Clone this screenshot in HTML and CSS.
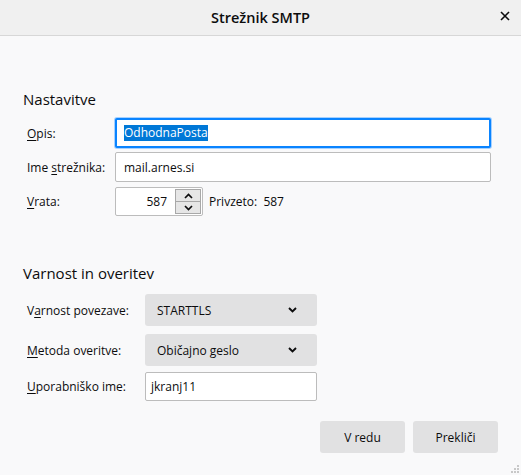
FILE: index.html
```html
<!DOCTYPE html>
<html lang="sl">
<head>
<meta charset="utf-8">
<title>Strežnik SMTP</title>
<link rel="stylesheet" href="styles.css">
</head>
<body>
<div class="dialog">
  <header class="titlebar">
    <span class="title">Strežnik SMTP</span>
    <span class="close">
      <svg width="10" height="10" viewBox="0 0 10 10"><path d="M1 1L9 9M9 1L1 9" stroke="#0c0c0d" stroke-width="1.6" fill="none"/></svg>
    </span>
  </header>
  <main class="content">
    <section class="settings">
      <h2 class="heading">Nastavitve</h2>
      <div class="rows">
        <div class="row row-30">
          <label class="label label-s"><u>O</u>pis:</label>
          <div class="field field-focus"><span class="sel">OdhodnaPosta</span></div>
        </div>
        <div class="row row-30 gap-4">
          <label class="label label-s">Ime <u>s</u>trežnika:</label>
          <div class="field">mail.arnes.si</div>
        </div>
        <div class="row row-29 gap-5">
          <label class="label label-s"><u>V</u>rata:</label>
          <div class="port">
            <span class="port-val">587</span>
            <span class="spin">
              <span class="spin-btn"><svg width="9" height="6" viewBox="0 0 9 6"><path d="M1 5L4.5 1.5L8 5" stroke="#0c0c0d" stroke-width="1.7" fill="none"/></svg></span>
              <span class="spin-btn"><svg width="9" height="6" viewBox="0 0 9 6"><path d="M1 1L4.5 4.5L8 1" stroke="#0c0c0d" stroke-width="1.7" fill="none"/></svg></span>
            </span>
          </div>
          <span class="default">Privzeto:&nbsp; 587</span>
        </div>
      </div>
    </section>
    <section class="security">
      <h2 class="heading">Varnost in overitev</h2>
      <div class="rows">
        <div class="row row-32">
          <label class="label label-l">V<u>a</u>rnost povezave:</label>
          <div class="select">STARTTLS<svg class="chev" width="9" height="6" viewBox="0 0 9 6"><path d="M1 1L4.5 4.5L8 1" stroke="#0c0c0d" stroke-width="1.9" fill="none"/></svg></div>
        </div>
        <div class="row row-32 gap-8">
          <label class="label label-l"><u>M</u>etoda overitve:</label>
          <div class="select">Običajno geslo<svg class="chev" width="9" height="6" viewBox="0 0 9 6"><path d="M1 1L4.5 4.5L8 1" stroke="#0c0c0d" stroke-width="1.9" fill="none"/></svg></div>
        </div>
        <div class="row row-29 gap-6">
          <label class="label label-l"><u>U</u>porabniško ime:</label>
          <div class="field field-short">jkranj11</div>
        </div>
      </div>
    </section>
    <footer class="buttons">
      <button class="btn">V redu</button>
      <button class="btn">Prekliči</button>
    </footer>
  </main>
  <span class="grip">
    <svg width="10" height="10" viewBox="0 0 10 10" fill="#c8c8c8">
      <rect x="7" y="1" width="2" height="2"/>
      <rect x="4" y="4" width="2" height="2"/><rect x="7" y="4" width="2" height="2"/>
      <rect x="1" y="7" width="2" height="2"/><rect x="4" y="7" width="2" height="2"/><rect x="7" y="7" width="2" height="2"/>
    </svg>
  </span>
</div>
</body>
</html>
```
FILE: styles.css
```css
html, body {
  margin: 0;
  padding: 0;
}
body {
  width: 521px;
  height: 475px;
  overflow: hidden;
  background: #f9f9fa;
  font-family: "Open Sans", "Noto Sans", sans-serif;
  font-size: 12px;
  color: #0c0c0d;
}
.dialog {
  position: relative;
  height: 475px;
}
.titlebar {
  height: 35px;
  background: #f0f0f0;
  border-bottom: 1px solid #d7d7d7;
  display: flex;
  align-items: center;
  justify-content: center;
  position: relative;
}
.title {
  font-size: 14.5px;
  font-weight: 600;
  color: #0c0c0d;
}
.close {
  position: absolute;
  right: 11px;
  top: 11px;
  width: 10px;
  height: 10px;
  display: flex;
}
.content {
  padding: 0 23px;
}
.heading {
  margin: 0;
  font-size: 15px;
  font-weight: 400;
  line-height: 20px;
}
.settings {
  padding-top: 53px;
}
.settings .heading {
  margin-bottom: 9px;
}
.rows {
  display: flex;
  flex-direction: column;
  padding-left: 4px;
}
.settings .rows {
  padding-right: 7px;
}
.row {
  display: flex;
  align-items: center;
}
.row-30 { height: 30px; }
.row-29 { height: 29px; }
.row-32 { height: 32px; }
.gap-4 { margin-top: 4px; }
.gap-5 { margin-top: 5px; }
.gap-6 { margin-top: 6px; }
.gap-8 { margin-top: 8px; }
.label {
  white-space: nowrap;
  flex: none;
}
.label-s { width: 88px; }
.label-l { width: 118px; }
.label u {
  text-decoration-thickness: 1px;
  text-underline-offset: 2px;
}
.field {
  box-sizing: border-box;
  flex: 1;
  height: 100%;
  background: #fff;
  border: 1px solid #bcbcbc;
  border-radius: 2px;
  display: flex;
  align-items: center;
  padding-left: 8px;
}
.field-focus {
  border: 2px solid #0a84ff;
  box-shadow: 0 0 0 1px #a6d1ff;
  padding-left: 7px;
}
.sel {
  background: #0078d7;
  color: #fff;
  line-height: 16px;
}
.port {
  box-sizing: border-box;
  width: 88px;
  height: 100%;
  background: #fff;
  border: 1px solid #bcbcbc;
  border-radius: 2px;
  display: flex;
  align-items: center;
  justify-content: flex-end;
  padding: 1px;
  flex: none;
}
.port-val {
  margin-right: 8px;
}
.spin {
  display: flex;
  flex-direction: column;
  width: 26px;
  height: 100%;
  border: 1px solid #a8a8a8;
  box-sizing: border-box;
  background: #e6e6e6;
}
.spin-btn {
  flex: 1;
  display: flex;
  align-items: center;
  justify-content: center;
}
.spin-btn + .spin-btn {
  border-top: 1px solid #a8a8a8;
}
.default {
  margin-left: 6px;
}
.security {
  padding-top: 47px;
}
.security .heading {
  margin-bottom: 11px;
}
.select {
  box-sizing: border-box;
  width: 172px;
  height: 100%;
  background: #e1e1e2;
  border-radius: 3px;
  display: flex;
  align-items: center;
  justify-content: space-between;
  padding: 0 20px 0 12px;
}
.chev {
  display: block;
}
.field-short {
  flex: none;
  width: 172px;
  padding-left: 5px;
}
.buttons {
  display: flex;
  justify-content: flex-end;
  gap: 8px;
  padding-top: 20px;
}
.btn {
  width: 85px;
  height: 32px;
  border: 0;
  border-radius: 3px;
  background: #e1e1e2;
  font-family: inherit;
  font-size: 12px;
  color: #0c0c0d;
  padding: 0;
}
.grip {
  position: absolute;
  right: 1px;
  bottom: 1px;
  width: 10px;
  height: 10px;
  display: flex;
}
```
